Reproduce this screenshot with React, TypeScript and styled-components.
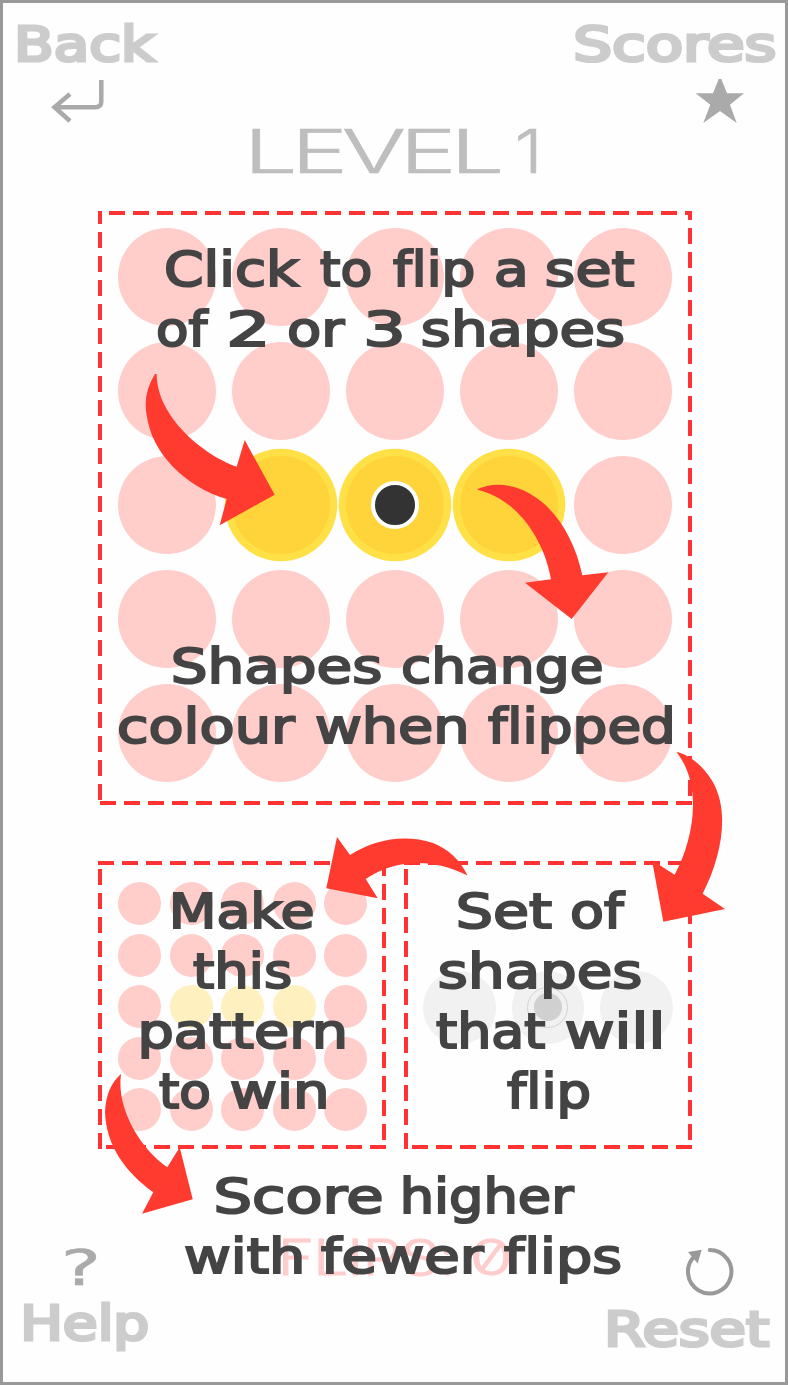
import React, { useLayoutEffect, useRef } from "react";
import styled, { createGlobalStyle, css } from "styled-components";

const Global = createGlobalStyle`
  * { box-sizing: border-box; }
  body { margin: 0; background: #fefefe; font-family: "DejaVu Sans", sans-serif; }
`;

const Screen = styled.main`
  position: relative;
  width: 788px;
  height: 1385px;
  border: 3px solid #999;
  background: #fefefe;
  overflow: hidden;
  display: flex;
  flex-direction: column;
`;

type Kind = "caption" | "nav" | "level" | "flips" | "mark";

const kinds = {
  caption: css`font-size: 48.5px; color: #444; -webkit-text-stroke: 2.1px #444;`,
  nav: css`font-size: 48px; color: #ccc; -webkit-text-stroke: 3.2px #ccc;`,
  level: css`font-family: Inter, sans-serif; font-weight: 300; font-size: 61px; letter-spacing: -4px; color: #bebebe; -webkit-text-stroke: 0.6px #bebebe;`,
  flips: css`font-family: Inter, sans-serif; font-weight: 300; font-size: 49px; letter-spacing: -1px; color: #fcc; -webkit-text-stroke: 0.8px #fcc; font-feature-settings: "zero" 1;`,
  mark: css`font-size: 49.5px; color: #aaa; -webkit-text-stroke: 0.5px #aaa;`,
};

const Line = styled.div<{ $kind: Kind; $indent?: number }>`
  display: flex;
  flex: none;
  height: 60px;
  line-height: 60px;
  letter-spacing: 0.01px;
  white-space: pre;
  padding-left: ${(p) => p.$indent ?? 0}px;
  ${(p) => kinds[p.$kind]}
`;

const Slot = styled.span<{ $width: number; $gap: number }>`
  display: block;
  flex: none;
  width: ${(p) => p.$width}px;
  margin-left: ${(p) => p.$gap}px;
`;

const Glyphs = styled.span`
  display: inline-block;
  transform-origin: 0 50%;
`;

/* Stretches a word so that its ink fills the slot it is given. */
function Word({ text, width, gap = 0 }: { text: string; width: number; gap?: number }) {
  const ref = useRef<HTMLSpanElement>(null);
  useLayoutEffect(() => {
    const el = ref.current;
    const ctx = document.createElement("canvas").getContext("2d");
    if (!el || !ctx) return;
    const s = getComputedStyle(el);
    ctx.font = `${s.fontWeight} ${s.fontSize} ${s.fontFamily}`;
    ctx.letterSpacing = s.letterSpacing;
    const m = ctx.measureText(text);
    const stroke = parseFloat(s.getPropertyValue("-webkit-text-stroke-width")) || 0;
    const left = m.actualBoundingBoxLeft + stroke / 2;
    const scale = width / (left + m.actualBoundingBoxRight + stroke / 2);
    el.style.transform = `translateX(${left * scale}px) scaleX(${scale})`;
  }, [text, width]);
  return (
    <Slot $width={width} $gap={gap}>
      <Glyphs ref={ref}>{text}</Glyphs>
    </Slot>
  );
}

/* Each word is [text, left edge, right edge], measured from the screen's left side. */
type WordSpec = [string, number, number];

function TextLine({ words, origin = 0, kind = "caption" }: { words: WordSpec[]; origin?: number; kind?: Kind }) {
  return (
    <Line $kind={kind} $indent={words[0][1] - origin}>
      {words.map(([text, from, to], i) => (
        <Word key={i} text={text} width={to - from} gap={i ? from - words[i - 1][2] : 0} />
      ))}
    </Line>
  );
}

const Header = styled.header`
  flex: none;
  display: flex;
  justify-content: space-between;
  height: 118px;
  padding: 11px 9px 0 14px;
`;

const NavButton = styled.div<{ $width: number }>`
  width: ${(p) => p.$width}px;
  display: flex;
  flex-direction: column;
`;

const NavIcon = styled.svg<{ $left: number; $top?: number }>`
  display: block;
  flex: none;
  width: 52px;
  height: 52px;
  margin: ${(p) => p.$top ?? 0}px 0 2px ${(p) => p.$left}px;
`;

const MarkBox = styled.div`
  height: 56px;
  padding-top: 1px;
`;

const Title = styled.div`
  flex: none;
  height: 90px;
`;

const dash = "#ff3333 16px, transparent 16px";

const Panel = styled.section<{ $size: number; $phase: [number, number, number, number] }>`
  flex: none;
  width: ${(p) => p.$size}px;
  height: ${(p) => p.$size}px;
  padding: ${(p) => (p.$size > 300 ? 17 : 21)}px 0 0 20px;
  background:
    linear-gradient(90deg, ${dash}) ${(p) => p.$phase[0]}px 0 / 24px 4px repeat-x,
    linear-gradient(180deg, ${dash}) 100% ${(p) => p.$phase[1]}px / 4px 24px repeat-y,
    linear-gradient(90deg, ${dash}) ${(p) => p.$phase[2]}px 100% / 24px 4px repeat-x,
    linear-gradient(180deg, ${dash}) 0 ${(p) => p.$phase[3]}px / 4px 24px repeat-y;
`;

const Board = styled.div<{ $pitch: number }>`
  display: grid;
  grid-template-columns: repeat(5, ${(p) => p.$pitch}px);
  grid-auto-rows: ${(p) => p.$pitch}px;
`;

const Disc = styled.div<{ $size: number; $color: string; $ring?: boolean }>`
  width: ${(p) => p.$size}px;
  height: ${(p) => p.$size}px;
  border-radius: 50%;
  background: ${(p) => p.$color};
  display: grid;
  place-items: center;
  box-shadow: ${(p) => (p.$ring ? "0 0 0 7.3px #ffe047" : "none")};
`;

const Dot = styled.div`
  width: 48px;
  height: 48px;
  border: 4px solid #fff;
  border-radius: 50%;
  background: #333;
`;

const PanelRow = styled.div<{ $top?: number }>`
  flex: none;
  display: flex;
  gap: 18px;
  margin-top: ${(p) => p.$top ?? 0}px;
  padding-left: 95px;
`;

const SetRow = styled.div`
  display: flex;
  gap: 16px;
  margin: 89px 0 0 -1px;
`;

const TargetRing = styled.div`
  width: 41px;
  height: 41px;
  border: 1.5px solid #d2d2d2;
  border-radius: 50%;
  display: grid;
  place-items: center;
`;

const Caption = styled.div<{ $left: number; $top: number }>`
  position: absolute;
  left: ${(p) => p.$left}px;
  top: ${(p) => p.$top}px;
`;

const Overlay = styled.svg`
  position: absolute;
  left: -3px;
  top: -3px;
  width: 788px;
  height: 1385px;
`;

const Footer = styled.footer`
  flex: none;
  display: flex;
  justify-content: space-between;
  margin-top: 88px;
  padding: 0 14px 0 19px;
`;

const cells = Array.from({ length: 25 }, (_, i) => i);
const flipped = (i: number) => i > 10 && i < 14;

const captions: { left: number; top: number; lines: WordSpec[][] }[] = [
  {
    left: 156, top: 239,
    lines: [
      [["Click", 165, 300], ["to", 319.5, 371], ["flip", 393, 474.5], ["a", 495, 525.5], ["set", 545.5, 634]],
      [["of", 157, 209.3], ["2", 229.5, 265.5], ["or", 288, 345.5], ["3", 366, 402], ["shapes", 422.3, 624]],
    ],
  },
  {
    left: 117, top: 636,
    lines: [
      [["Shapes", 172.5, 380.5], ["change", 401.7, 602.3]],
      [["colour", 118, 296], ["when", 315.5, 466], ["flipped", 487.7, 672.5]],
    ],
  },
  {
    left: 140, top: 881,
    lines: [
      [["Make", 171.7, 313.3]],
      [["this", 193.2, 291]],
      [["pattern", 140.7, 344.5]],
      [["to", 158.7, 210], ["win", 231, 326.5]],
    ],
  },
  {
    left: 436, top: 881,
    lines: [
      [["Set", 457.7, 551.7], ["of", 571.3, 626]],
      [["shapes", 439, 641]],
      [["that", 436.3, 545.7], ["will", 566, 661]],
      [["flip", 507.4, 590.7]],
    ],
  },
  {
    left: 184, top: 1166,
    lines: [
      [["Score", 215.8, 382.3], ["higher", 403.3, 575]],
      [["with", 184.5, 301.7], ["fewer", 321, 484.7], ["flips", 504.3, 621]],
    ],
  },
];

export default function App() {
  return (
    <>
      <Global />
      <Screen>
        <Header>
          <NavButton $width={141}>
            <TextLine kind="nav" origin={17} words={[["Back", 17.3, 157]]} />
            <NavIcon $left={34} viewBox="51 74 52 52" overflow="visible" fill="none" stroke="#aaa" strokeWidth="4.5">
              <path d="M101.3 80V101.3Q101.3 107.3 95.3 107.3H54M70 94L54.5 107.3L70 121" />
            </NavIcon>
          </NavButton>
          <NavButton $width={202}>
            <TextLine kind="nav" origin={574} words={[["Scores", 574.8, 775.7]]} />
            <NavIcon $left={120} viewBox="694 74 52 52" fill="#aaa">
              <path d="M718.7 79h2.6l5.7 14.3h17L730 104.7l6.7 18.3L720 111l-16.7 12 7-18.3L695.7 93.3H713z" />
            </NavIcon>
          </NavButton>
        </Header>
        <Title>
          <TextLine kind="level" origin={3} words={[["LEVEL", 251, 501], ["1", 518, 537.3]]} />
        </Title>
        <PanelRow>
          <Panel $size={594} $phase={[-13, -7, 2, -3]}>
            <Board $pitch={114}>
              {cells.map((i) => (
                <Disc key={i} $size={98} $color={flipped(i) ? "#ffd43a" : "#ffcdca"} $ring={flipped(i)}>
                  {i === 12 && <Dot />}
                </Disc>
              ))}
            </Board>
          </Panel>
        </PanelRow>
        <PanelRow $top={56}>
          <Panel $size={288} $phase={[0, -1, 8, 8]}>
            <Board $pitch={51.5}>
              {cells.map((i) => (
                <Disc key={i} $size={43.3} $color={flipped(i) ? "#fff0c0" : "#ffcdca"} />
              ))}
            </Board>
          </Panel>
          <Panel $size={288} $phase={[0, -1, 8, 8]}>
            <SetRow>
              <Disc $size={72.5} $color="#f1f1f1" />
              <Disc $size={72.5} $color="#f1f1f1">
                <TargetRing>
                  <Disc $size={28} $color="#d0d0d0" />
                </TargetRing>
              </Disc>
              <Disc $size={72.5} $color="#f1f1f1" />
            </SetRow>
          </Panel>
        </PanelRow>
        <Footer>
          <NavButton $width={126}>
            <MarkBox>
              <TextLine kind="mark" origin={22} words={[["?", 64.5, 96]]} />
            </MarkBox>
            <TextLine kind="nav" origin={22} words={[["Help", 22.7, 148]]} />
          </NavButton>
          <NavButton $width={165}>
            <NavIcon $left={78} $top={8} viewBox="684 1245 52 52">
              <path d="M709.7 1250A21.7 21.7 0 1 1 694.5 1256.2" fill="none" stroke="#999" strokeWidth="4" strokeLinecap="round" />
              <path d="M688 1252L701.7 1249.7L697.7 1263.5Z" fill="#999" />
            </NavIcon>
            <TextLine kind="nav" origin={606} words={[["Reset", 606.5, 769.5]]} />
          </NavButton>
        </Footer>

        <Caption $left={279} $top={1225}>
          <TextLine kind="flips" origin={282} words={[["FLIPS:", 282, 452], ["0", 472.5, 510]]} />
        </Caption>
        <Overlay viewBox="0 0 788 1385" fill="#ff3b30">
          <path transform="translate(90 200) scale(.33333)" d="M195 522Q158 580 170 645C185 760 285 860 410 897L389 976L554 884L464 720L440 800C340 765 200 650 200 522Z" />
          <path transform="translate(400 440) scale(.33333)" d="M233 147Q285 124 345 142C450 175 520 280 547 406L625 397L515 537L375 428L453 418C435 310 360 180 233 149Z" />
          <path transform="translate(390 740) scale(.33333)" d="M863 36Q925 55 968 125C1020 215 995 350 938 461L1005 507L820 545L786 361L854 404C910 300 940 140 861 38Z" />
          <path d="M467.5 875.5Q456 852 433 843C405 834 375 839 350 855L337 837L326.3 888.3L377.7 898.3L365.7 879C395 860 430 857 467.5 875.5Z" />
          <path d="M121 1074Q106 1087 105 1112C106 1145 125 1172 153.3 1192.3L142 1213.7L192.7 1199.3L179.7 1147.3L167.3 1167.3C142 1150 116 1110 121 1074Z" />
        </Overlay>
        {captions.map((c) => (
          <Caption key={c.top + c.left} $left={c.left - 3} $top={c.top - 3}>
            {c.lines.map((words, i) => (
              <TextLine key={i} words={words} origin={c.left} />
            ))}
          </Caption>
        ))}
      </Screen>
    </>
  );
}
